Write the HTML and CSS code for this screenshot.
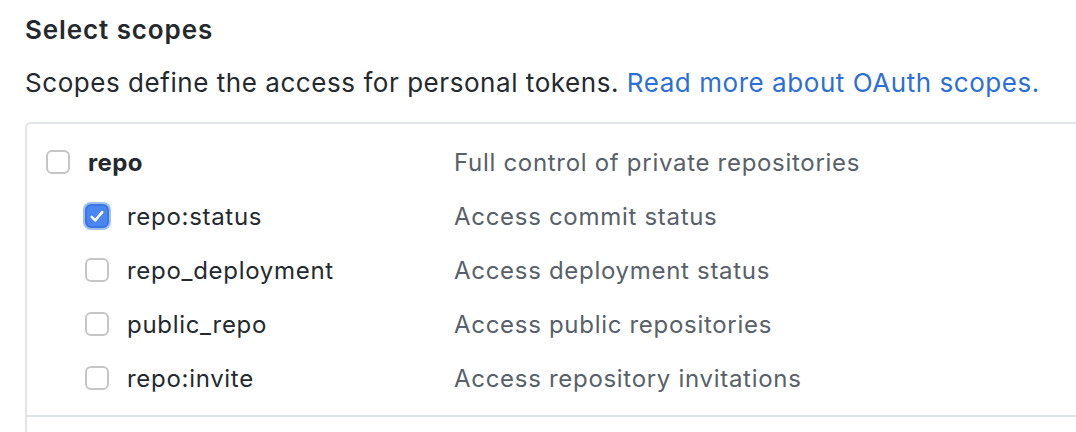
FILE: index.html
```html
<!DOCTYPE html>
<html>
<head>
<meta charset="utf-8">
<link rel="stylesheet" href="styles.css">
</head>
<body>
<div class="page">
  <h3 class="title">Select scopes</h3>
  <p class="intro">Scopes define the access for personal tokens. <a class="link" href="#">Read more about OAuth scopes.</a></p>
  <div class="scopes">
    <div class="group">
      <div class="row parent">
        <label class="name"><span class="cb"></span><span class="label bold">repo</span></label>
        <span class="desc">Full control of private repositories</span>
      </div>
      <div class="row child">
        <label class="name"><span class="cb checked"><svg viewBox="0 0 16 16" width="20" height="20"><path d="M3.8 8.7l2.8 2.8 5.6-6.6" fill="none" stroke="#fff" stroke-width="2" stroke-linecap="round" stroke-linejoin="round"/></svg></span><span class="label">repo:status</span></label>
        <span class="desc">Access commit status</span>
      </div>
      <div class="row child">
        <label class="name"><span class="cb"></span><span class="label">repo_deployment</span></label>
        <span class="desc">Access deployment status</span>
      </div>
      <div class="row child">
        <label class="name"><span class="cb"></span><span class="label">public_repo</span></label>
        <span class="desc">Access public repositories</span>
      </div>
      <div class="row child">
        <label class="name"><span class="cb"></span><span class="label">repo:invite</span></label>
        <span class="desc">Access repository invitations</span>
      </div>
    </div>
    <div class="group next"></div>
  </div>
</div>
</body>
</html>
```

FILE: styles.css
```css
html, body {
  margin: 0;
  padding: 0;
  background: #fff;
  overflow: hidden;
}
body {
  font-family: Inter, "Noto Sans", sans-serif;
  color: #24292e;
}
.page {
  padding: 13px 0 0 25px;
}
.title {
  margin: 0;
  font-size: 26px;
  font-weight: 600;
  letter-spacing: 0.9px;
  line-height: 34px;
}
.intro {
  margin: 19px 0 0 0;
  font-size: 26px;
  letter-spacing: 0.55px;
  line-height: 34px;
}
.link {
  color: #2b6fd7;
  text-decoration: none;
}
.scopes {
  margin-top: 22px;
  width: 1100px;
  border: 2px solid #e1e4e8;
  border-right: none;
  border-radius: 6px 0 0 6px;
}
.group {
  padding: 11px 20px 10px 19px;
}
.group.next {
  border-top: 2px solid #e1e4e8;
  height: 40px;
}
.row {
  display: flex;
  align-items: center;
  height: 54px;
  font-size: 24px;
  letter-spacing: 0.7px;
}
.name {
  display: flex;
  align-items: center;
  width: 408px;
}
.child .name {
  padding-left: 39px;
  width: 369px;
}
.cb {
  width: 24px;
  height: 24px;
  box-sizing: border-box;
  border: 2px solid #c6c6c6;
  border-radius: 6px;
  background: #fff;
  display: flex;
  align-items: center;
  justify-content: center;
  flex: none;
}
.cb.checked {
  background: #4a86ef;
  border-color: #3a76e2;
  box-shadow: 0 0 0 2px #9fc0f6;
}
.label {
  margin-left: 18px;
}
.bold {
  font-weight: 700;
  letter-spacing: 0.4px;
}
.desc {
  color: #586069;
}
```
